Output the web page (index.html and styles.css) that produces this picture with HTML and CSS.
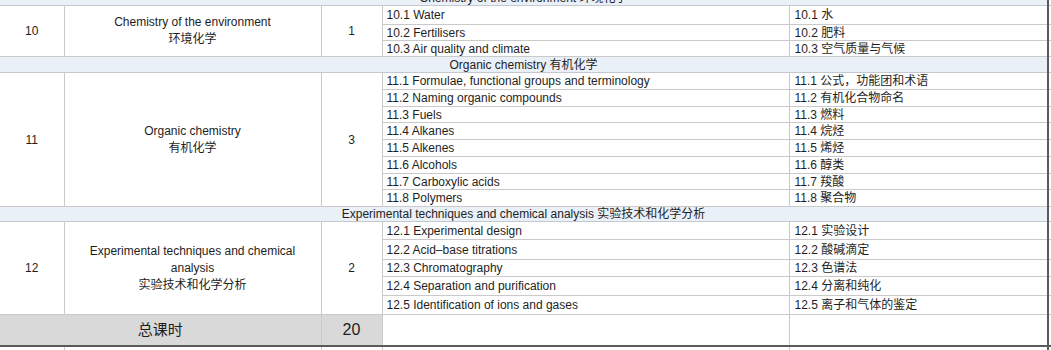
FILE: index.html
```html
<!DOCTYPE html>
<html lang="zh">
<head>
<meta charset="utf-8">
<link rel="stylesheet" href="styles.css">
</head>
<body>
<div class="sheet">
<table class="grid">
  <colgroup>
    <col class="c1"><col class="c2"><col class="c3"><col class="c4"><col class="c5"><col class="c6">
  </colgroup>
  <tbody>
    <tr class="sec h15"><td colspan="5">Chemistry of the environment 环境化学</td><td class="ext"></td></tr>
    <tr class="p19">
      <td rowspan="3" class="num">10</td>
      <td rowspan="3" class="name">Chemistry of the environment<br>环境化学</td>
      <td rowspan="3" class="num">1</td>
      <td class="en">10.1 Water</td><td class="zh">10.1 水</td><td class="ext"></td>
    </tr>
    <tr class="p16"><td class="en">10.2 Fertilisers</td><td class="zh">10.2 肥料</td><td class="ext"></td></tr>
    <tr class="p16"><td class="en">10.3 Air quality and climate</td><td class="zh">10.3 空气质量与气候</td><td class="ext"></td></tr>

    <tr class="sec h16"><td colspan="5">Organic chemistry 有机化学</td><td class="ext"></td></tr>
    <tr class="p17">
      <td rowspan="8" class="num">11</td>
      <td rowspan="8" class="name">Organic chemistry<br>有机化学</td>
      <td rowspan="8" class="num">3</td>
      <td class="en">11.1 Formulae, functional groups and terminology</td><td class="zh">11.1 公式，功能团和术语</td><td class="ext"></td>
    </tr>
    <tr class="p17"><td class="en">11.2 Naming organic compounds</td><td class="zh">11.2 有机化合物命名</td><td class="ext"></td></tr>
    <tr class="p16"><td class="en">11.3 Fuels</td><td class="zh">11.3 燃料</td><td class="ext"></td></tr>
    <tr class="p17"><td class="en">11.4 Alkanes</td><td class="zh">11.4 烷烃</td><td class="ext"></td></tr>
    <tr class="p17"><td class="en">11.5 Alkenes</td><td class="zh">11.5 烯烃</td><td class="ext"></td></tr>
    <tr class="p17"><td class="en">11.6 Alcohols</td><td class="zh">11.6 醇类</td><td class="ext"></td></tr>
    <tr class="p16"><td class="en">11.7 Carboxylic acids</td><td class="zh">11.7 羧酸</td><td class="ext"></td></tr>
    <tr class="p17"><td class="en">11.8 Polymers</td><td class="zh">11.8 聚合物</td><td class="ext"></td></tr>

    <tr class="sec h15"><td colspan="5">Experimental techniques and chemical analysis 实验技术和化学分析</td><td class="ext"></td></tr>
    <tr class="p18">
      <td rowspan="5" class="num">12</td>
      <td rowspan="5" class="name">Experimental techniques and chemical analysis<br>实验技术和化学分析</td>
      <td rowspan="5" class="num">2</td>
      <td class="en">12.1 Experimental design</td><td class="zh">12.1 实验设计</td><td class="ext"></td>
    </tr>
    <tr class="p20"><td class="en">12.2 Acid–base titrations</td><td class="zh">12.2 酸碱滴定</td><td class="ext"></td></tr>
    <tr class="p17"><td class="en">12.3 Chromatography</td><td class="zh">12.3 色谱法</td><td class="ext"></td></tr>
    <tr class="p19"><td class="en">12.4 Separation and purification</td><td class="zh">12.4 分离和纯化</td><td class="ext"></td></tr>
    <tr class="p19"><td class="en">12.5 Identification of ions and gases</td><td class="zh">12.5 离子和气体的鉴定</td><td class="ext"></td></tr>

    <tr class="total">
      <td colspan="2" class="tlabel">总课时</td>
      <td class="tnum">20</td>
      <td class="blank"></td><td class="blank"></td><td class="ext"></td>
    </tr>
    <tr class="after"><td></td><td></td><td></td><td></td><td></td><td class="ext"></td></tr>
  </tbody>
</table>
</div>
</body>
</html>
```

FILE: styles.css
```css
html, body {
  margin: 0;
  padding: 0;
  background: #ffffff;
}

body {
  font-family: "Liberation Sans", Arial, "Noto Sans CJK SC", sans-serif;
  font-size: 12px;
  color: #1e1e1e;
  overflow: hidden;
}

.sheet {
  width: 1051px;
  margin-top: -10px;
}

.grid {
  border-collapse: collapse;
  table-layout: fixed;
  width: 1051px;
}

.c1 { width: 64px; }
.c2 { width: 257px; }
.c3 { width: 61px; }
.c4 { width: 407px; }
.c5 { width: 259px; }
.c6 { width: 3px; }

.grid td {
  border: 1px solid #cacaca;
  padding: 0;
  line-height: 14px;
  white-space: nowrap;
  overflow: hidden;
}

.grid tr > td:first-child {
  border-left: none;
}

.grid td.ext {
  border-left: 2px solid #5a5a5a;
  border-right: none;
}

.sec td {
  background: #eaf0f8;
  text-align: center;
  border-top-color: #c4c9d0;
  border-bottom-color: #c4c9d0;
}
.sec td.ext { background: #ffffff; }

.h15 { height: 15px; }
.h16 { height: 16px; }
.p16 { height: 16px; }
.p17 { height: 17px; }
.p18 { height: 18px; }
.p19 { height: 19px; }
.p20 { height: 20px; }

.num {
  text-align: center;
  vertical-align: middle;
}

.name {
  text-align: center;
  vertical-align: middle;
  white-space: normal !important;
  padding: 0 22px !important;
  line-height: 17px !important;
}

.en, .zh {
  padding-left: 4px !important;
  vertical-align: middle;
}

.zh {
  padding-left: 5px !important;
}

.total { height: 31px; }

.total td {
  border-top: 1px solid #8c8c8c;
  border-bottom: 2px solid #5a5a5a;
}

.tlabel, .tnum {
  background: #d9d9d9;
  text-align: center;
  font-size: 15px;
}

.tnum { font-size: 16px; }

.total td.blank { background: #ffffff; }

.after { height: 10px; }
```
